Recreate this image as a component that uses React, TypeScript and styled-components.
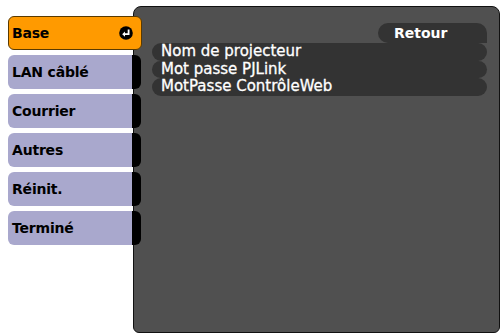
import React from "react";
import styled, { createGlobalStyle } from "styled-components";

const GlobalStyle = createGlobalStyle`
  html, body {
    margin: 0;
    padding: 0;
    background: #ffffff;
  }
  body {
    font-family: "DejaVu Sans", "Liberation Sans", sans-serif;
  }
`;

const tabs = ["Base", "LAN câblé", "Courrier", "Autres", "Réinit.", "Terminé"];
const items = ["Nom de projecteur", "Mot passe PJLink", "MotPasse ContrôleWeb"];

function EnterIcon() {
  return (
    <svg width="14" height="14" viewBox="0 0 14 14">
      <circle cx="7" cy="7" r="6.8" fill="#000" />
      <path d="M9.6 3.4 V8.2 H5" stroke="#fff" strokeWidth="1.8" fill="none" />
      <path d="M3.2 8.2 L6 5.6 L6 10.8 Z" fill="#fff" />
    </svg>
  );
}

export default function App() {
  return (
    <>
      <GlobalStyle />
      <Screen>
        <TabColumn>
          {tabs.map((t, i) => (
            <Tab key={t} active={i === 0}>
              <TabLabel>{t}</TabLabel>
              {i === 0 && <EnterIcon />}
            </Tab>
          ))}
        </TabColumn>
        <Panel>
          <BackRow>
            <BackButton>Retour</BackButton>
          </BackRow>
          <ItemList>
            {items.map((it) => (
              <Item key={it}>{it}</Item>
            ))}
          </ItemList>
        </Panel>
      </Screen>
    </>
  );
}

const Screen = styled.div`
  display: flex;
  width: 504px;
  height: 334px;
  padding: 6px 4px 1px 8px;
  box-sizing: border-box;
`;

const TabColumn = styled.div`
  display: flex;
  flex-direction: column;
  gap: 5px;
  width: 134px;
  padding-top: 10px;
  position: relative;
  z-index: 1;
  flex-shrink: 0;
`;

const Tab = styled.div<{ active?: boolean }>`
  display: flex;
  align-items: center;
  justify-content: space-between;
  height: 34px;
  box-sizing: border-box;
  padding: 0 8px 0 4px;
  border-radius: 6px;
  color: #000;
  ${(p) =>
    p.active
      ? `
    width: 134px;
    background: #ff9a00;
    border: 1px solid #5a3a00;
    padding-left: 3px;
  `
      : `
    width: 133px;
    background: linear-gradient(to right, #a9a8cd 0, #a9a8cd 124px, #000 124px);
  `}
`;

const TabLabel = styled.span`
  font-size: 14px;
  font-weight: bold;
  letter-spacing: -0.2px;
`;

const Panel = styled.div`
  flex: 1;
  margin-left: -9px;
  background: #505050;
  border: 1px solid #111;
  border-radius: 8px 8px 6px 6px;
  padding: 16px 12px 0 18px;
  display: flex;
  flex-direction: column;
`;

const BackRow = styled.div`
  display: flex;
  justify-content: flex-end;
`;

const BackButton = styled.div`
  width: 109px;
  height: 20px;
  box-sizing: border-box;
  padding-left: 16px;
  background: #333;
  border-radius: 10px 10px 0 10px;
  color: #fff;
  font-size: 14px;
  font-weight: bold;
  line-height: 20px;
`;

const ItemList = styled.div`
  display: flex;
  flex-direction: column;
`;

const Item = styled.div`
  height: 17.5px;
  padding-left: 9px;
  background: #333;
  border-radius: 9px;
  color: #fff;
  font-size: 15px;
  line-height: 17px;
  -webkit-text-stroke: 0.3px #fff;
`;
